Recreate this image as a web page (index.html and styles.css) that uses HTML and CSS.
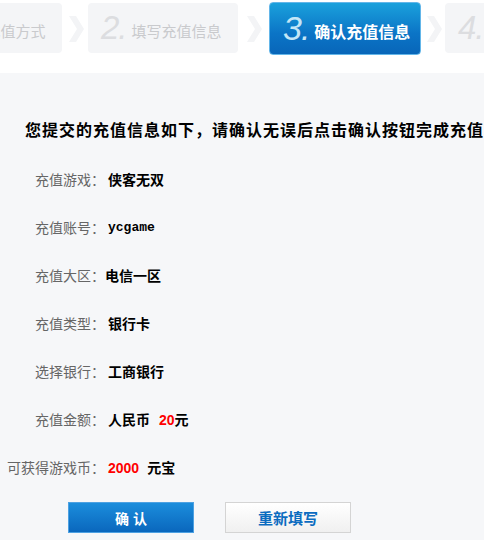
FILE: index.html
```html
<!DOCTYPE html>
<html lang="zh-CN">
<head>
    <meta charset="UTF-8">
    <title>确认充值信息</title>
    <link rel="stylesheet" href="styles.css">
</head>
<body>
    <div class="steps-wrap">
        <div class="steps">
            <div class="step"><span class="num">1.</span><span class="txt">选择充值方式</span></div>
            <svg class="arrow" width="26" height="50" viewBox="0 0 26 50"><polygon points="7,13 14,13 22,26 14,39 7,39 15,26" fill="#f3f4f6"/></svg>
            <div class="step"><span class="num">2.</span><span class="txt">填写充值信息</span></div>
            <svg class="arrow" width="31" height="50" viewBox="0 0 31 50"><polygon points="9,13 16,13 24,26 16,39 9,39 17,26" fill="#f3f4f6"/></svg>
            <div class="step active"><span class="num">3.</span><span class="txt">确认充值信息</span></div>
            <svg class="arrow" width="24" height="50" viewBox="0 0 24 50"><polygon points="6,13 13,13 21,26 13,39 6,39 14,26" fill="#f3f4f6"/></svg>
            <div class="step"><span class="num">4.</span><span class="txt">充值完成</span></div>
        </div>
    </div>

    <div class="content">
        <h2 class="title">您提交的充值信息如下，请确认无误后点击确认按钮完成充值</h2>
        <div class="row"><span class="label">充值游戏：</span><span class="value">侠客无双</span></div>
        <div class="row"><span class="label">充值账号：</span><span class="value mono">ycgame</span></div>
        <div class="row"><span class="label">充值大区：</span><span class="value tight">电信一区</span></div>
        <div class="row"><span class="label">充值类型：</span><span class="value">银行卡</span></div>
        <div class="row"><span class="label">选择银行：</span><span class="value">工商银行</span></div>
        <div class="row"><span class="label">充值金额：</span><span class="value">人民币<em class="red gap-l">20</em>元</span></div>
        <div class="row"><span class="label">可获得游戏币：</span><span class="value"><em class="red gap-r">2000</em>元宝</span></div>

        <div class="buttons">
            <button class="btn btn-ok">确 认</button>
            <button class="btn btn-reset">重新填写</button>
        </div>
    </div>
</body>
</html>
```

FILE: styles.css
```css
body {
    margin: 0;
    padding: 0;
    background-color: #f6f7f9;
    font-family: "Liberation Sans", "Noto Sans CJK SC", sans-serif;
    color: #000;
    overflow: hidden;
}

.steps-wrap {
    height: 73px;
    background-color: #fff;
    overflow: hidden;
}

.steps {
    display: flex;
    align-items: flex-start;
    margin-left: -88px;
    padding-top: 3px;
    width: 800px;
}

.step {
    flex: none;
    width: 150px;
    height: 50px;
    box-sizing: border-box;
    padding-left: 13px;
    background-color: #f4f5f7;
    border-radius: 4px;
    display: flex;
    align-items: center;
    color: #c9cacd;
    white-space: nowrap;
}

.step .num {
    font-family: "Liberation Sans", sans-serif;
    font-style: italic;
    font-size: 33px;
    color: #dcdde0;
    margin-right: 5px;
    letter-spacing: -1px;
}

.step .txt {
    font-size: 15px;
    margin-top: 4px;
}

.step.active {
    width: 152px;
    height: 53px;
    margin-top: -1px;
    padding-left: 13px;
    background: linear-gradient(#1aa1dc, #0b74c6 60%, #0866b9);
    border: 1px solid #63b6e9;
    color: #fff;
}

.step.active .num {
    color: #c4e6f7;
    font-size: 34px;
}

.step.active .txt {
    font-size: 16px;
    font-weight: bold;
}

.arrow {
    flex: none;
    display: block;
}

.content {
    padding-top: 34px;
}

.title {
    margin: 0;
    padding-left: 25px;
    font-size: 16px;
    font-weight: bold;
    line-height: 48px;
    letter-spacing: 1px;
    white-space: nowrap;
}

.row {
    display: flex;
    height: 48px;
    align-items: center;
    font-size: 14px;
}

.label {
    width: 105px;
    text-align: right;
    color: #666;
    white-space: nowrap;
}

.value {
    padding-left: 3px;
    font-weight: bold;
    white-space: pre;
}

.value.tight {
    padding-left: 0;
}

.mono {
    font-family: "Liberation Mono", monospace;
    font-size: 13px;
}

.red {
    color: #f00;
    font-style: normal;
}

.gap-l {
    margin-left: 9px;
}

.gap-r {
    margin-right: 8px;
}

.buttons {
    display: flex;
    gap: 31px;
    padding-left: 68px;
    margin-top: 11px;
}

.btn {
    width: 126px;
    height: 31px;
    font-family: "Liberation Sans", "Noto Sans CJK SC", sans-serif;
    font-weight: bold;
    cursor: pointer;
    padding: 0;
}

.btn-ok {
    background: linear-gradient(#1b8ddc, #0a67bd);
    border: 1px solid #4da1e2;
    color: #fff;
    font-size: 14px;
}

.btn-reset {
    background: linear-gradient(#fff, #f0f0f0);
    border: 1px solid #d4d4d4;
    color: #0b6cc0;
    font-size: 15px;
}
```
